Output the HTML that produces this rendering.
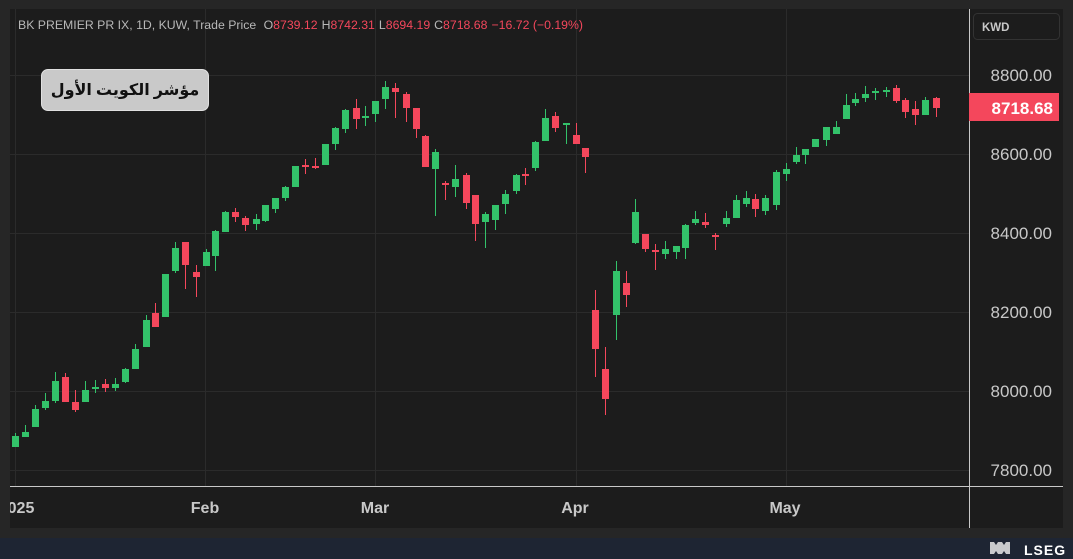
<!DOCTYPE html>
<html><head><meta charset="utf-8"><style>
html,body{margin:0;padding:0;background:#262626;width:1073px;height:559px;overflow:hidden;font-family:"Liberation Sans",sans-serif}
svg{position:absolute;left:0;top:0}
.lbl{position:absolute;left:41px;top:69px;width:166px;height:40px;border-radius:7px;background:#c9c9c9;border:1px solid #e0e0e0;color:#111;font:bold 16px "Liberation Serif","DejaVu Sans",serif;display:flex;align-items:center;justify-content:center;direction:rtl;white-space:nowrap}
</style></head><body>
<svg width="1073" height="559" viewBox="0 0 1073 559" xmlns="http://www.w3.org/2000/svg">
<rect x="0" y="0" width="1073" height="538" fill="#262626"/>
<rect x="0" y="538" width="1073" height="21" fill="#1e2533"/>
<rect x="10" y="9" width="1053" height="519" fill="#1c1c1c"/>
<g stroke="#2b2b2b" stroke-width="1">
<path d="M10 75.5H969M10 154.5H969M10 233.5H969M10 312.5H969M10 391.5H969M10 470.5H969"/>
<path d="M15.5 9V486M205.5 9V486M375.5 9V486M576.5 9V486M786.5 9V486"/>
</g>
<path d="M969.5 9V528M10 486.5H1063" stroke="#c8c8c8" stroke-width="1"/>
<path stroke="#33c26a" stroke-width="1" d="M15.5 433V447M25.5 425V437M35.5 405V427M45.5 393V410M55.5 372V403M85.5 381V402M95.5 380V393M115.5 378V391M125.5 368V383M135.5 344V369M146.5 315V347M165.5 274V317M175.5 242V273M206.5 249V266M215.5 230V271M225.5 211V232M256.5 214V230M265.5 205V222M275.5 198V213M285.5 186V201M295.5 166V187M325.5 144V165M335.5 127V150M345.5 109V133M365.5 106V126M375.5 101V122M385.5 81V109M435.5 149V216M455.5 165V197M485.5 212V248M495.5 205V230M505.5 190V214M516.5 174V194M535.5 141V171M545.5 109V141M566.5 123V144M616.5 261V340M635.5 199V244M665.5 241V259M676.5 246V259M685.5 224V259M695.5 211V225M726.5 211V227M736.5 195V218M746.5 191V207M765.5 195V215M776.5 170V210M786.5 163V181M796.5 147V164M805.5 149V164M815.5 139V147M826.5 127V146M836.5 121V134M846.5 94V119M855.5 93V106M865.5 86V102M875.5 88V100M886.5 87V97M925.5 97V115"/>
<g fill="#33c26a">
<rect x="12" y="436" width="7" height="11"/><rect x="22" y="432" width="7" height="5"/><rect x="32" y="409" width="7" height="18"/><rect x="42" y="401" width="7" height="7"/><rect x="52" y="381" width="7" height="20"/><rect x="82" y="390" width="7" height="12"/><rect x="92" y="387" width="7" height="2"/><rect x="112" y="384" width="7" height="4"/><rect x="122" y="369" width="7" height="13"/><rect x="132" y="349" width="7" height="20"/><rect x="143" y="320" width="7" height="27"/><rect x="162" y="274" width="7" height="43"/><rect x="172" y="248" width="7" height="23"/><rect x="203" y="252" width="7" height="14"/><rect x="212" y="231" width="7" height="25"/><rect x="222" y="212" width="7" height="20"/><rect x="253" y="219" width="7" height="5"/><rect x="262" y="205" width="7" height="16"/><rect x="272" y="198" width="7" height="11"/><rect x="282" y="187" width="7" height="11"/><rect x="292" y="166" width="7" height="21"/><rect x="322" y="144" width="7" height="21"/><rect x="332" y="128" width="7" height="16"/><rect x="342" y="110" width="7" height="19"/><rect x="362" y="116" width="7" height="2"/><rect x="372" y="101" width="7" height="13"/><rect x="382" y="87" width="7" height="12"/><rect x="432" y="152" width="7" height="17"/><rect x="452" y="179" width="7" height="8"/><rect x="482" y="214" width="7" height="8"/><rect x="492" y="205" width="7" height="15"/><rect x="502" y="194" width="7" height="10"/><rect x="513" y="175" width="7" height="16"/><rect x="532" y="142" width="7" height="26"/><rect x="542" y="118" width="7" height="23"/><rect x="563" y="123" width="7" height="2"/><rect x="613" y="271" width="7" height="44"/><rect x="632" y="212" width="7" height="31"/><rect x="662" y="249" width="7" height="5"/><rect x="673" y="246" width="7" height="6"/><rect x="682" y="225" width="7" height="23"/><rect x="692" y="219" width="7" height="4"/><rect x="723" y="218" width="7" height="6"/><rect x="733" y="200" width="7" height="18"/><rect x="743" y="198" width="7" height="6"/><rect x="762" y="198" width="7" height="13"/><rect x="773" y="172" width="7" height="33"/><rect x="783" y="169" width="7" height="5"/><rect x="793" y="155" width="7" height="7"/><rect x="802" y="149" width="7" height="6"/><rect x="812" y="139" width="7" height="8"/><rect x="823" y="127" width="7" height="13"/><rect x="833" y="127" width="7" height="7"/><rect x="843" y="105" width="7" height="14"/><rect x="852" y="99" width="7" height="4"/><rect x="862" y="94" width="7" height="4"/><rect x="872" y="91" width="7" height="2"/><rect x="883" y="90" width="7" height="2"/><rect x="922" y="100" width="7" height="15"/>
</g>
<path stroke="#f4475c" stroke-width="1" d="M65.5 373V402M75.5 390V412M105.5 379V392M155.5 303V327M185.5 242V289M196.5 265V297M235.5 208V222M245.5 216V231M305.5 159V174M315.5 158V169M356.5 99V129M395.5 83V118M406.5 92V122M416.5 108V138M425.5 135V167M445.5 181V200M466.5 173V209M475.5 195V241M525.5 168V185M555.5 112V132M576.5 123V144M585.5 148V173M595.5 290V377M605.5 347V415M626.5 271V307M645.5 234V252M655.5 244V270M705.5 213V228M715.5 233V250M755.5 194V217M896.5 85V103M905.5 98V118M915.5 101V125M936.5 97V117"/>
<g fill="#f4475c">
<rect x="62" y="377" width="7" height="25"/><rect x="72" y="402" width="7" height="8"/><rect x="102" y="384" width="7" height="4"/><rect x="152" y="313" width="7" height="14"/><rect x="182" y="242" width="7" height="23"/><rect x="193" y="272" width="7" height="5"/><rect x="232" y="212" width="7" height="5"/><rect x="242" y="218" width="7" height="7"/><rect x="302" y="165" width="7" height="2"/><rect x="312" y="166" width="7" height="2"/><rect x="353" y="108" width="7" height="11"/><rect x="392" y="88" width="7" height="4"/><rect x="403" y="94" width="7" height="14"/><rect x="413" y="108" width="7" height="21"/><rect x="422" y="136" width="7" height="31"/><rect x="442" y="183" width="7" height="2"/><rect x="463" y="175" width="7" height="28"/><rect x="472" y="195" width="7" height="29"/><rect x="522" y="174" width="7" height="2"/><rect x="552" y="116" width="7" height="12"/><rect x="573" y="135" width="7" height="9"/><rect x="582" y="148" width="7" height="9"/><rect x="592" y="310" width="7" height="39"/><rect x="602" y="369" width="7" height="30"/><rect x="623" y="283" width="7" height="12"/><rect x="642" y="234" width="7" height="15"/><rect x="652" y="250" width="7" height="2"/><rect x="702" y="222" width="7" height="3"/><rect x="712" y="235" width="7" height="2"/><rect x="752" y="199" width="7" height="10"/><rect x="893" y="88" width="7" height="13"/><rect x="902" y="100" width="7" height="12"/><rect x="912" y="109" width="7" height="6"/><rect x="933" y="98" width="7" height="10"/>
</g>
<text x="18" y="29" font-size="12.2" fill="#b8b8b8" textLength="565" lengthAdjust="spacingAndGlyphs">BK PREMIER PR IX, 1D, KUW, Trade Price <tspan dx="4">O</tspan><tspan fill="#f4475c">8739.12</tspan><tspan dx="4">H</tspan><tspan fill="#f4475c">8742.31</tspan><tspan dx="4">L</tspan><tspan fill="#f4475c">8694.19</tspan><tspan dx="4">C</tspan><tspan fill="#f4475c">8718.68</tspan><tspan dx="4" fill="#f4475c">−16.72 (−0.19%)</tspan></text>
<rect x="973.5" y="13.5" width="86" height="26" rx="4" fill="#1c1c1c" stroke="#333"/>
<text x="982" y="31" font-size="11.5" font-weight="bold" fill="#c8c8c8">KWD</text>
<g font-size="17" fill="#c8c8c8" text-anchor="end">
<text x="1052" y="81">8800.00</text>
<text x="1052" y="160">8600.00</text>
<text x="1052" y="239">8400.00</text>
<text x="1052" y="318">8200.00</text>
<text x="1052" y="397">8000.00</text>
<text x="1052" y="476">7800.00</text>
</g>
<rect x="969" y="93" width="90" height="28" fill="#f4475c"/>
<text x="1053" y="114" font-size="17" font-weight="bold" fill="#fff" text-anchor="end">8718.68</text>
<g font-size="16" font-weight="bold" fill="#c8c8c8" text-anchor="middle">
<text x="21" y="513">025</text>
<text x="205" y="513">Feb</text>
<text x="375" y="513">Mar</text>
<text x="575" y="513">Apr</text>
<text x="785" y="513">May</text>
</g>
<rect x="0" y="486" width="10" height="42" fill="#262626"/>
<g fill="#e8e8e8" opacity="0.85"><path d="M990 542h4l2 3 2-3h4l2 3 2-3h4v12h-4l-2-3-2 3h-4l-2-3-2 3h-4z"/></g>
<text x="1024" y="555" font-size="14" font-weight="bold" fill="#ffffff" letter-spacing="1">LSEG</text>
</svg>
<div class="lbl">مؤشر الكويت الأول</div>
</body></html>
